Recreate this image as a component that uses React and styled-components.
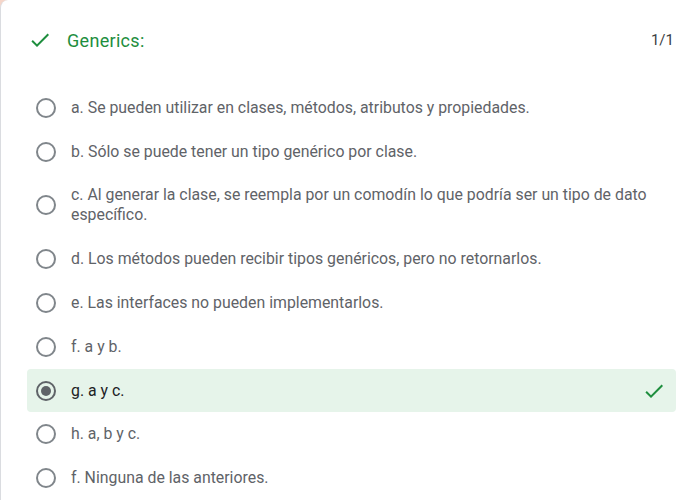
import React from 'react'
import styled, { createGlobalStyle } from 'styled-components';

const GlobalStyle = createGlobalStyle`
    html, body {
        margin: 0;
        padding: 0;
        background: #f6d6c9;
        font-family: Roboto, "Noto Sans", Arial, sans-serif;
    }
`;

const options = [
    { id: 'a', text: 'a. Se pueden utilizar en clases, métodos, atributos y propiedades.' },
    { id: 'b', text: 'b. Sólo se puede tener un tipo genérico por clase.' },
    { id: 'c', text: 'c. Al generar la clase, se reempla por un comodín lo que podría ser un tipo de dato específico.' },
    { id: 'd', text: 'd. Los métodos pueden recibir tipos genéricos, pero no retornarlos.' },
    { id: 'e', text: 'e. Las interfaces no pueden implementarlos.' },
    { id: 'f', text: 'f. a y b.' },
    { id: 'g', text: 'g. a y c.', selected: true, correct: true },
    { id: 'h', text: 'h. a, b y c.' },
    { id: 'f2', text: 'f. Ninguna de las anteriores.' },
];

function CheckIcon({ size = 24 }) {
    return (
        <svg width={size} height={size} viewBox="0 0 24 24" fill="#1e8e3e">
            <path d="M9 16.17L4.83 12l-1.42 1.41L9 19 21 7l-1.41-1.41z" />
        </svg>
    )
}

function App() {
    return (
        <>
            <GlobalStyle />
            <Card>
                <Header>
                    <HeaderIcon><CheckIcon /></HeaderIcon>
                    <Title>Generics:</Title>
                    <Score>1/1</Score>
                </Header>
                <OptionList>
                    {options.map(o => (
                        <Option key={o.id} $correct={o.correct}>
                            <Radio $checked={o.selected} />
                            <Label $checked={o.selected}>{o.text}</Label>
                            {o.correct && <RowIcon><CheckIcon /></RowIcon>}
                        </Option>
                    ))}
                </OptionList>
            </Card>
        </>
    )
}

const Card = styled.div`
    box-sizing: border-box;
    width: 100%;
    min-height: 520px;
    background: #fff;
    border-left: 1px solid #dadce0;
    border-top-left-radius: 8px;
    padding: 24px 12px 0 26px;
`;

const Header = styled.div`
    display: flex;
    align-items: center;
    height: 32px;
    margin-bottom: 30px;
`;

const HeaderIcon = styled.div`
    display: flex;
    margin-left: 1px;
    margin-right: 15px;
`;

const Title = styled.div`
    flex: 1;
    color: #1e8e3e;
    font-size: 18px;
    letter-spacing: 0.3px;
`;

const Score = styled.div`
    color: #3c4043;
    font-size: 15px;
    margin-right: 2px;
`;

const OptionList = styled.div`
    display: flex;
    flex-direction: column;
`;

const Option = styled.div`
    display: flex;
    align-items: center;
    padding: 11.9px 10px 11.9px 9px;
    border-radius: 4px;
    background: ${p => p.$correct ? '#e6f4ea' : 'transparent'};
`;

const Radio = styled.div`
    position: relative;
    flex: none;
    box-sizing: border-box;
    width: 20px;
    height: 20px;
    border-radius: 50%;
    border: 2px solid ${p => p.$checked ? '#5f6368' : '#80868b'};
    margin-right: 15px;
    &::after {
        content: '';
        display: ${p => p.$checked ? 'block' : 'none'};
        position: absolute;
        top: 3px;
        left: 3px;
        width: 10px;
        height: 10px;
        border-radius: 50%;
        background: #5f6368;
    }
`;

const Label = styled.div`
    flex: 1;
    font-size: 15.85px;
    line-height: 20px;
    color: ${p => p.$checked ? '#202124' : '#5f6368'};
`;

const RowIcon = styled.div`
    display: flex;
    height: 20px;
    align-items: center;
`;

export default App;
